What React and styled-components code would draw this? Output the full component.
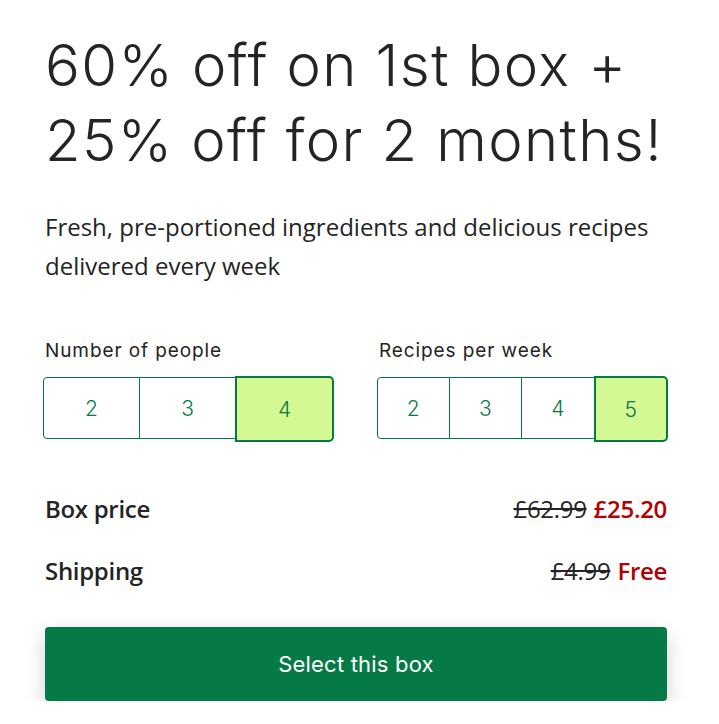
import React, { useState } from 'react';
import styled, { createGlobalStyle } from 'styled-components';

const GlobalStyle = createGlobalStyle`
  body {
    margin: 0;
    background: #ffffff;
    font-family: "Open Sans", "Liberation Sans", sans-serif;
  }
`;

const StyledWrapper = styled.main`
  width: 622px;
  padding: 28px 0 0 45px;
`;

const StyledHeading = styled.h1`
  margin: 0;
  font-family: Inter, "Liberation Sans", sans-serif;
  font-weight: 300;
  font-size: 58px;
  line-height: 75px;
  letter-spacing: 1.4px;
  color: #242424;
`;

const StyledLead = styled.p`
  margin: 29px 0 0;
  font-family: "Open Sans", "Liberation Sans", sans-serif;
  font-size: 24px;
  line-height: 39px;
  color: #242424;
`;

const StyledPickers = styled.div`
  display: grid;
  grid-template-columns: 290px 290px;
  column-gap: 44px;
  margin-top: 54px;
  margin-left: -2px;
`;

const StyledLabel = styled.div`
  font-family: Inter, "Liberation Sans", sans-serif;
  font-size: 19px;
  letter-spacing: 0.9px;
  color: #242424;
  margin: 0 0 14px 2px;
  line-height: 24px;
`;

const StyledGroup = styled.div`
  display: grid;
  grid-template-columns: repeat(${({ count }) => count}, 1fr);
  height: 62px;
`;

const StyledOption = styled.button`
  font-family: Inter, "Liberation Sans", sans-serif;
  font-size: 21px;
  font-weight: 300;
  color: #067a46;
  background: ${({ active }) => (active ? '#d4f894' : '#ffffff')};
  border: 1px solid #067a46;
  border-left-width: ${({ first }) => (first ? '1px' : '0')};
  border-radius: ${({ first, last }) =>
    first ? '4px 0 0 4px' : last ? '0 4px 4px 0' : '0'};
  padding: 0;
  cursor: pointer;

  ${({ active }) =>
    active &&
    `
    border: 2.5px solid #067a46;
    margin: -1px -1px -3px -1px;
    border-radius: 0 5px 5px 0;
    position: relative;
  `}
`;

const StyledRows = styled.div`
  margin-top: 50px;
  display: flex;
  flex-direction: column;
  gap: 24px;
`;

const StyledRow = styled.div`
  display: flex;
  justify-content: space-between;
  align-items: center;
  height: 38px;
  font-family: "Open Sans", "Liberation Sans", sans-serif;
  font-size: 24px;
  font-weight: 600;
  color: #242424;
  letter-spacing: -0.3px;
`;

const StyledOld = styled.s`
  font-weight: 400;
  color: #242424;
  margin-right: 7px;
`;

const StyledNew = styled.span`
  color: #b30000;
`;

const StyledButton = styled.button`
  display: block;
  width: 622px;
  height: 74px;
  margin-top: 38px;
  background: #067a46;
  border: none;
  border-radius: 4px;
  color: #ffffff;
  font-family: Inter, "Liberation Sans", sans-serif;
  font-size: 22px;
  letter-spacing: 0.2px;
  box-shadow: 0 8px 20px rgba(0, 0, 0, 0.18);
  cursor: pointer;
`;

const Picker = ({ label, options, value, onChange }) => (
  <div>
    <StyledLabel>{label}</StyledLabel>
    <StyledGroup count={options.length}>
      {options.map((opt, i) => (
        <StyledOption
          key={opt}
          first={i === 0}
          last={i === options.length - 1}
          active={opt === value}
          onClick={() => onChange(opt)}
        >
          {opt}
        </StyledOption>
      ))}
    </StyledGroup>
  </div>
);

const App = () => {
  const [people, setPeople] = useState(4);
  const [recipes, setRecipes] = useState(5);

  return (
    <StyledWrapper>
      <GlobalStyle />
      <StyledHeading>
        60% off on 1st box +
        <br />
        25% off for 2 months!
      </StyledHeading>
      <StyledLead>
        Fresh, pre-portioned ingredients and delicious recipes delivered every week
      </StyledLead>
      <StyledPickers>
        <Picker label="Number of people" options={[2, 3, 4]} value={people} onChange={setPeople} />
        <Picker label="Recipes per week" options={[2, 3, 4, 5]} value={recipes} onChange={setRecipes} />
      </StyledPickers>
      <StyledRows>
        <StyledRow>
          <span>Box price</span>
          <span>
            <StyledOld>£62.99</StyledOld>
            <StyledNew>£25.20</StyledNew>
          </span>
        </StyledRow>
        <StyledRow>
          <span>Shipping</span>
          <span>
            <StyledOld>£4.99</StyledOld>
            <StyledNew>Free</StyledNew>
          </span>
        </StyledRow>
      </StyledRows>
      <StyledButton>Select this box</StyledButton>
    </StyledWrapper>
  );
};

export default App;
